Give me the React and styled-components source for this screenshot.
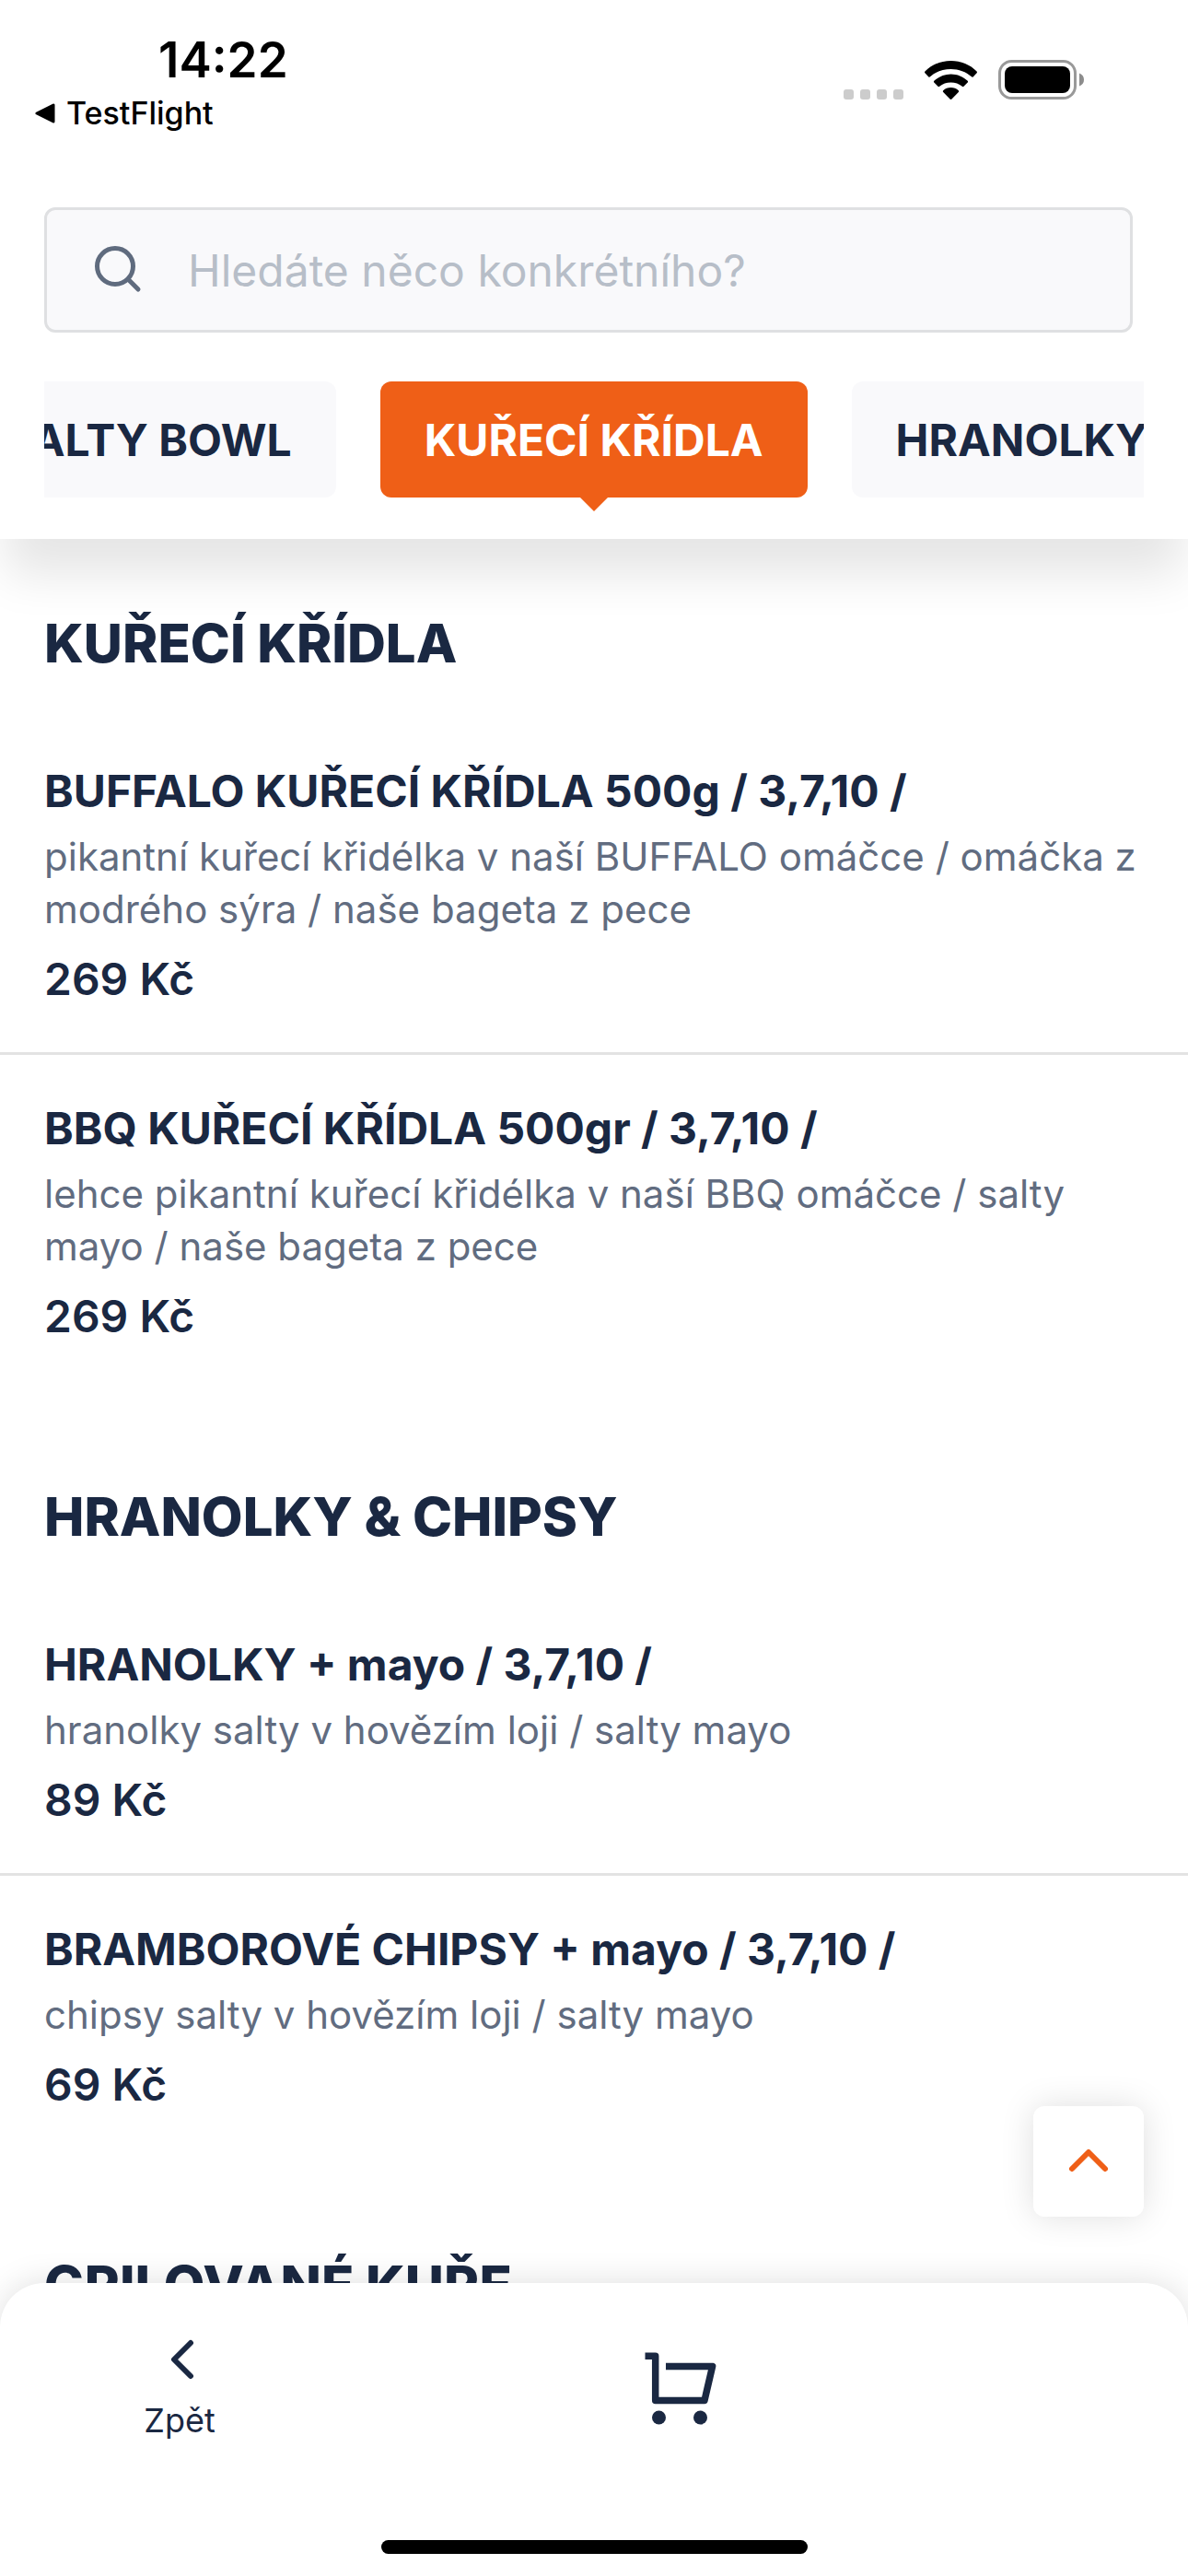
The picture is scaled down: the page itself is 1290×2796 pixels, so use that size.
import React, { useLayoutEffect, useRef } from "react";
import styled, { createGlobalStyle, ThemeProvider } from "styled-components";

const theme = {
  ink: "#1a2842",
  muted: "#616c80",
  hint: "#b7bec8",
  line: "#e3e3e3",
  outline: "#dfe0e2",
  surface: "#f9f9fb",
  accent: "#ef5f17",
};

const GlobalStyle = createGlobalStyle`
  *, *::before, *::after { box-sizing: border-box; }
  body { margin: 0; background: #fff; font-family: Inter, "Noto Sans", sans-serif; }
  button, input { font: inherit; }
`;

const Screen = styled.div`
  display: flex;
  flex-direction: column;
  height: 100vh;
  overflow: hidden;
  background: #fff;
  color: ${({ theme }) => theme.ink};
`;

const Header = styled.header`
  z-index: 2;
  flex: none;
  background: #fff;
  box-shadow: 0 45px 48px -6px rgba(0, 0, 0, 0.1);
`;

const StatusBar = styled.div`
  display: flex;
  justify-content: space-between;
  align-items: flex-start;
  padding: 34px 112px 0 38px;
  height: 225px;
  color: #000;
`;

const StatusLeft = styled.div`
  display: flex;
  flex-direction: column;
`;

const Clock = styled.time`
  padding-left: 134px;
  font-size: 53px;
  font-weight: 600;
  line-height: 62px;
`;

const ReturnLink = styled.a`
  display: flex;
  align-items: center;
  gap: 12px;
  color: inherit;
  font-size: 34px;
  font-weight: 500;
  line-height: 54px;
  text-decoration: none;
`;

const StatusIcons = styled.div`
  display: flex;
  align-items: flex-end;
  gap: 23px;
  padding-top: 31px;

  svg { display: block; }
`;

const SearchField = styled.label`
  display: flex;
  align-items: center;
  gap: 45px;
  height: 136px;
  margin: 0 60px 0 48px;
  padding: 0 48px;
  border: 3px solid ${({ theme }) => theme.outline};
  border-radius: 12px;
  background: ${({ theme }) => theme.surface};
  color: #5f6b7e;

  svg { flex: none; }
`;

const SearchInput = styled.input`
  flex: 1;
  min-width: 0;
  padding: 0;
  border: 0;
  outline: 0;
  background: transparent;
  color: ${({ theme }) => theme.ink};
  font-size: 48px;

  &::placeholder { color: ${({ theme }) => theme.hint}; opacity: 1; }
`;

const Tabs = styled.nav`
  display: flex;
  gap: 48px;
  margin: 53px 48px 0;
  padding-bottom: 45px;
  overflow-x: auto;
  scrollbar-width: none;
`;

const Tab = styled.button`
  position: relative;
  flex: none;
  height: 126px;
  padding: 0 48px;
  border: 0;
  border-radius: 12px;
  background: ${({ $active, theme }) => ($active ? theme.accent : theme.surface)};
  color: ${({ $active, theme }) => ($active ? "#fff" : theme.ink)};
  font-size: 48px;
  font-weight: 700;
  white-space: nowrap;

  &::after {
    content: "";
    display: ${({ $active }) => ($active ? "block" : "none")};
    position: absolute;
    top: 100%;
    left: 50%;
    margin-left: -15px;
    border: 15px solid transparent;
    border-top-color: ${({ theme }) => theme.accent};
    border-bottom: 0;
  }
`;

const Content = styled.div`
  position: relative;
  display: flex;
  flex: 1;
  min-height: 0;
`;

const Menu = styled.main`
  flex: 1;
  overflow-y: auto;
  scrollbar-width: none;
`;

const Section = styled.section`
  padding: 77px 0 25px;
`;

const SectionTitle = styled.h2`
  margin: 0 48px 45px;
  font-size: 58px;
  font-weight: 800;
  line-height: 72px;
`;

const Item = styled.article`
  padding: 48px 48px 47px;

  & + & { border-top: 3px solid ${({ theme }) => theme.line}; }
`;

const ItemTitle = styled.h3`
  margin: 0;
  font-size: 48px;
  font-weight: 700;
  line-height: 64px;
`;

const Description = styled.p`
  margin: 10px 0 16px;
  color: ${({ theme }) => theme.muted};
  font-size: 42px;
  line-height: 57px;
`;

const Price = styled.p`
  margin: 0;
  font-size: 48px;
  font-weight: 600;
  line-height: 64px;
`;

const ScrollTop = styled.button`
  position: absolute;
  right: 48px;
  bottom: 72px;
  display: grid;
  place-items: center;
  width: 120px;
  height: 120px;
  padding: 0;
  border: 0;
  border-radius: 12px;
  background: #fff;
  color: ${({ theme }) => theme.accent};
  box-shadow: 0 0 36px rgba(0, 0, 0, 0.13);
`;

const BottomBar = styled.footer`
  z-index: 2;
  flex: none;
  display: flex;
  flex-direction: column;
  align-items: center;
  justify-content: space-between;
  height: 318px;
  padding-bottom: 24px;
  border-radius: 48px 48px 0 0;
  background: #fff;
  box-shadow: 0 0 36px rgba(0, 0, 0, 0.13);
`;

const Actions = styled.nav`
  display: grid;
  grid-template-columns: 390px 1fr 204px;
  align-self: stretch;
  height: 216px;
`;

const Action = styled.button`
  display: flex;
  flex-direction: column;
  align-items: center;
  gap: 6px;
  padding: 47px 0 0;
  border: 0;
  background: transparent;
  color: inherit;
  font-size: 36px;
  line-height: 48px;

  svg { display: block; }
`;

const CartAction = styled(Action)`
  padding-top: 68px;
`;

const HomeIndicator = styled.div`
  width: 463px;
  height: 15px;
  border-radius: 8px;
  background: #000;
`;

function Chevron({ direction }) {
  const d = direction === "up" ? "M18 44 36 26 54 44" : "M48 18 30 36 48 54";
  return (
    <svg width="72" height="72" viewBox="0 0 72 72" fill="none" stroke="currentColor" strokeWidth="6" strokeLinecap="round" strokeLinejoin="round" aria-hidden="true">
      <path d={d} />
    </svg>
  );
}

function BackTriangle() {
  return (
    <svg width="22" height="22" viewBox="0 0 22 22" aria-hidden="true">
      <path d="M2 11 20 2V20Z" fill="#000" stroke="#000" strokeWidth="3" strokeLinejoin="round" />
    </svg>
  );
}

function SignalDots() {
  return (
    <svg width="65" height="11" viewBox="0 0 65 11" fill="#ccc" aria-hidden="true">
      {[0, 18, 36, 54].map((x) => (
        <rect key={x} x={x} width="11" height="11" rx="3" />
      ))}
    </svg>
  );
}

function Wifi() {
  return (
    <svg width="57" height="42" viewBox="0 0 57 42" aria-hidden="true">
      <path d="M28.5 0C39.5 0 49.5 4.2 56.6 11.5Q57.3 12.400 56.6 13.2L52.6 17.4Q51.8 18 51 17.3C45 12 37.2 9 28.5 9S12 12 6 17.3Q5.2 18 4.4 17.4L.4 13.2Q-.3 12.4.4 11.5C7.5 4.2 17.5 0 28.5 0Z" />
      <path d="M28.5 14.5C35.5 14.5 41.8 17.3 46.7 21.8Q47.5 22.7 46.7 23.5L42.5 27.8Q41.7 28.5 40.8 27.8C37.4 25 33.2 23.5 28.5 23.5S19.6 25 16.2 27.8Q15.3 28.5 14.5 27.8L10.3 23.5Q9.5 22.7 10.3 21.8C15.2 17.3 21.5 14.5 28.5 14.5Z" />
      <path d="M28.5 29C31.7 29 34.6 30.2 36.8 32.2Q37.6 33.1 36.8 33.9L29.5 41.5Q28.5 42.3 27.5 41.5L20.2 33.9Q19.4 33.1 20.2 32.2C22.4 30.2 25.3 29 28.5 29Z" />
    </svg>
  );
}

function Battery() {
  return (
    <svg width="94" height="43" viewBox="0 0 94 43" aria-hidden="true">
      <rect x="1.5" y="1.5" width="82" height="40" rx="13" fill="none" stroke="#999" strokeWidth="3" />
      <rect x="7" y="7" width="71" height="29" rx="8" />
      <path d="M88 14.5Q93 16.5 93 21.5T88 28.5Z" fill="#8c8c8c" />
    </svg>
  );
}

function SearchIcon() {
  return (
    <svg width="60" height="60" viewBox="0 0 60 60" fill="none" stroke="currentColor" strokeWidth="5" strokeLinecap="round" aria-hidden="true">
      <circle cx="26" cy="26" r="19.5" />
      <path d="M40 40 51 51" />
    </svg>
  );
}

function CartIcon() {
  return (
    <svg width="90" height="90" viewBox="0 0 90 90" fill="none" stroke="currentColor" strokeWidth="7.5" strokeLinejoin="round" aria-hidden="true">
      <path d="M7.5 11.2H18.7V59.5H72L80.6 22.5H30" />
      <circle cx="22.5" cy="78" r="7.5" fill="currentColor" stroke="none" />
      <circle cx="67.5" cy="78" r="7.5" fill="currentColor" stroke="none" />
    </svg>
  );
}

const categories = ["SALTY BOWL", "KUŘECÍ KŘÍDLA", "HRANOLKY & CHIPSY"];
const activeCategory = "KUŘECÍ KŘÍDLA";

const sections = [
  {
    title: "KUŘECÍ KŘÍDLA",
    items: [
      {
        name: "BUFFALO KUŘECÍ KŘÍDLA 500g / 3,7,10 /",
        description: "pikantní kuřecí křidélka v naší BUFFALO omáčce / omáčka z modrého sýra / naše bageta z pece",
        price: "269 Kč",
      },
      {
        name: "BBQ KUŘECÍ KŘÍDLA 500gr / 3,7,10 /",
        description: "lehce pikantní kuřecí křidélka v naší BBQ omáčce / salty mayo / naše bageta z pece",
        price: "269 Kč",
      },
    ],
  },
  {
    title: "HRANOLKY & CHIPSY",
    items: [
      { name: "HRANOLKY + mayo / 3,7,10 /", description: "hranolky salty v hovězím loji / salty mayo", price: "89 Kč" },
      { name: "BRAMBOROVÉ CHIPSY + mayo / 3,7,10 /", description: "chipsy salty v hovězím loji / salty mayo", price: "69 Kč" },
    ],
  },
  { title: "GRILOVANÉ KUŘE", items: [] },
];

function CategoryTabs() {
  const listRef = useRef(null);
  const activeRef = useRef(null);

  // Keep the selected category in the middle of the strip.
  useLayoutEffect(() => {
    const center = () => {
      const list = listRef.current;
      const tab = activeRef.current;
      if (!list || !tab) return;
      const a = list.getBoundingClientRect();
      const b = tab.getBoundingClientRect();
      list.scrollLeft += b.left + b.width / 2 - (a.left + a.width / 2);
    };
    center();
    document.fonts?.ready.then(center);
    window.addEventListener("resize", center);
    return () => window.removeEventListener("resize", center);
  }, []);

  return (
    <Tabs ref={listRef}>
      {categories.map((name) => {
        const active = name === activeCategory;
        return (
          <Tab key={name} type="button" $active={active} ref={active ? activeRef : undefined}>
            {name}
          </Tab>
        );
      })}
    </Tabs>
  );
}

export default function App() {
  return (
    <ThemeProvider theme={theme}>
      <GlobalStyle />
      <Screen>
        <Header>
          <StatusBar>
            <StatusLeft>
              <Clock>14:22</Clock>
              <ReturnLink href="#testflight">
                <BackTriangle />
                TestFlight
              </ReturnLink>
            </StatusLeft>
            <StatusIcons>
              <SignalDots />
              <Wifi />
              <Battery />
            </StatusIcons>
          </StatusBar>
          <SearchField>
            <SearchIcon />
            <SearchInput type="search" aria-label="Hledat" placeholder="Hledáte něco konkrétního?" />
          </SearchField>
          <CategoryTabs />
        </Header>
        <Content>
          <Menu>
            {sections.map((section) => (
              <Section key={section.title}>
                <SectionTitle>{section.title}</SectionTitle>
                {section.items.map((item) => (
                  <Item key={item.name}>
                    <ItemTitle>{item.name}</ItemTitle>
                    <Description>{item.description}</Description>
                    <Price>{item.price}</Price>
                  </Item>
                ))}
              </Section>
            ))}
          </Menu>
          <ScrollTop type="button" aria-label="Nahoru">
            <Chevron direction="up" />
          </ScrollTop>
        </Content>
        <BottomBar>
          <Actions>
            <Action type="button">
              <Chevron direction="left" />
              Zpět
            </Action>
            <CartAction type="button" aria-label="Košík">
              <CartIcon />
            </CartAction>
          </Actions>
          <HomeIndicator />
        </BottomBar>
      </Screen>
    </ThemeProvider>
  );
}
